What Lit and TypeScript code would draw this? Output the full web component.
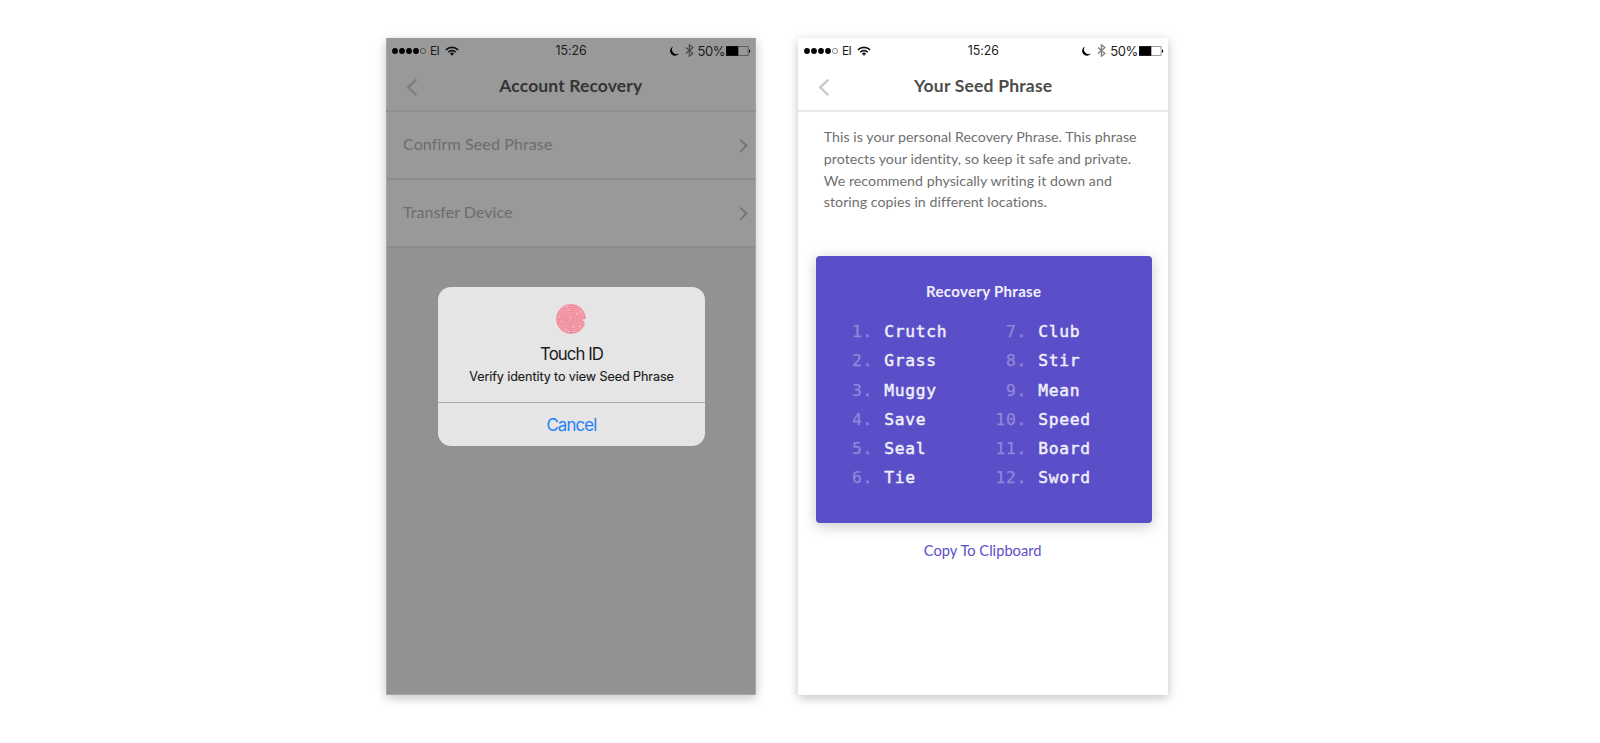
import { LitElement, html, css, svg } from "lit";
import { customElement, property } from "lit/decorators.js";

@customElement("status-bar")
class StatusBar extends LitElement {
  static styles = css`
    :host {
      display: grid;
      grid-template-columns: 1fr auto 1fr;
      align-items: center;
      height: 24px;
      padding: 0 4.5px 0 6px;
      font: 12.4px/24px Inter, "Liberation Sans", sans-serif;
      color: #1c1c1c;
    }
    svg { display: block; flex: none; }
    .left, .right { display: flex; align-items: center; }
    .right { justify-content: flex-end; }
    .carrier { font-size: 12px; margin: 0 6px 0 4px; letter-spacing: -0.6px; }
    .time { letter-spacing: -0.05px; padding: 1px 1px 0 0; }
    .moon { margin-right: 6px; }
    .blue { margin-right: 4px; }
    .pct { font-size: 13px; letter-spacing: -0.45px; margin-right: 1px; padding-top: 1px; }
  `;
  render() {
    return html`
      <div class="left">
        <svg width="34" height="8" viewBox="0 0 34 8">
          ${[3, 10, 17, 24].map((x) => svg`<circle cx=${x} cy="4" r="2.9"/>`)}
          <circle cx="31" cy="4" r="2.6" fill="none" stroke="#000" stroke-opacity=".55" stroke-width=".8"/>
        </svg>
        <span class="carrier">EI</span>
        <svg width="14" height="10" viewBox="0 0 14 10" fill="none" stroke="#111" stroke-width="1.6">
          <path d="M.9 3.9a8.7 8.7 0 0 1 12.2 0"/>
          <path d="M3.2 6.2a5.4 5.4 0 0 1 7.6 0"/>
          <path d="M4.9 7.6a3 3 0 0 1 4.2 0L7 9.8z" fill="#111" stroke="none"/>
        </svg>
      </div>
      <span class="time">15:26</span>
      <div class="right">
        <svg class="moon" width="9" height="10" viewBox="0 0 9 10">
          <path d="M3.2.4A4.8 4.8 0 1 0 9 7.4 4.6 4.6 0 0 1 3.2.4z"/>
        </svg>
        <svg class="blue" width="9" height="13" viewBox="0 0 9 13" fill="none" stroke="#000" stroke-opacity=".5" stroke-width="1.3">
          <path d="M.9 3.4l7 6L4.4 12.2V.8l3.5 2.8-7 6"/>
        </svg>
        <span class="pct">50%</span>
        <svg width="25" height="10" viewBox="0 0 25 10">
          <rect x=".5" y=".6" width="21.6" height="8.8" fill="none" stroke="#000" stroke-opacity=".45" stroke-width=".9"/>
          <rect x=".1" y=".2" width="12.2" height="9.6"/>
          <path d="M23 3.2a1.9 1.9 0 0 1 0 3.6z"/>
        </svg>
      </div>`;
  }
}

@customElement("nav-header")
class NavHeader extends LitElement {
  @property() heading = "";
  static styles = css`
    :host {
      display: grid;
      grid-template-columns: 60px 1fr 60px;
      align-items: start;
      height: 48px;
      color: var(--title);
      border-bottom: 2px solid var(--line);
    }
    svg { display: block; margin: 16px 0 0 20px; }
    .title {
      text-align: center;
      white-space: nowrap;
      font: 700 17.5px/48px Lato, sans-serif;
      letter-spacing: var(--track, 0.12px);
    }
  `;
  render() {
    return html`
      <svg width="12" height="19" viewBox="0 0 12 19" fill="none" stroke="var(--back)" stroke-width="2.3">
        <path d="M10.3 1.6L2.2 9.3l8.1 7.9"/>
      </svg>
      <span class="title">${this.heading}</span>`;
  }
}

// Fingerprint glyph: concentric ridges over a tinted disc, with small breaks.
@customElement("finger-print")
class FingerPrint extends LitElement {
  static styles = css`
    :host, svg { display: block; }
  `;
  render() {
    const gaps = [[11, 2.5], [12.5, 6], [21, 9.5], [24.5, 8], [3.5, 12.5], [6.5, 17.5], [14, 12.5], [26.5, 16], [17, 22.5], [10, 26], [13, 27.5], [18, 27], [24, 22.5]];
    return html`<svg width="30" height="30" viewBox="0 0 30 30">
      <circle cx="15" cy="15" r="14.9" fill="#f3a6b1"/>
      <g fill="none" stroke="#ee7f92" stroke-width=".9">
        ${[2, 4, 6, 8, 10, 12, 14].map((r) => svg`<circle cx="15" cy="15" r=${r}/>`)}
      </g>
      <g fill="#f4d3d7">${gaps.map(([x, y]) => svg`<circle cx=${x} cy=${y} r=".8"/>`)}</g>
      <path d="M30.5 14.5l-3.6 1.2 1.6 2-.6 2.6 3-1z" fill="#e5e5e5"/>
    </svg>`;
  }
}

const WORDS = ["Crutch", "Grass", "Muggy", "Save", "Seal", "Tie", "Club", "Stir", "Mean", "Speed", "Board", "Sword"];

@customElement("app-root")
class AppRoot extends LitElement {
  static styles = css`
    :host {
      display: flex;
      align-items: flex-start;
      gap: 42.4px;
      box-sizing: border-box;
      height: 743px;
      padding: 38px 0 0 386px;
      overflow: hidden;
      background: #fff;
      font-family: Lato, sans-serif;
    }
    .phone {
      flex: none;
      box-sizing: border-box;
      height: 657px;
      box-shadow: 0 3px 10px rgba(0, 0, 0, 0.24);
    }
    .dim {
      width: 369.6px;
      display: grid;
      background: #929292;
      --title: #343434;
      --line: #8f8f8f;
      --back: #7e7e7e;
      box-shadow: 0 3px 10px rgba(0, 0, 0, 0.24), inset 0 0 0 1px #a8a8a8;
    }
    .dim > * { grid-area: 1 / 1; }
    .top { background: #999; margin: 1px 1px 0; }
    .top status-bar { margin: -1px -1px 0; }
    .top nav-header { margin: 0 -1px; }
    .lit {
      width: 370.4px;
      background: #fff;
      --title: #4c4c4c;
      --line: #e8e8e8;
      --back: #c9c9cc;
      --track: 0.2px;
    }
    .row {
      display: flex;
      justify-content: space-between;
      align-items: flex-start;
      height: 66px;
      padding: 0 6.5px 0 16px;
      border-bottom: 2px solid #8c8c8c;
      font-size: 16px;
      line-height: 64px;
      letter-spacing: 0.13px;
      color: #6c6c6c;
    }
    .row + .row { letter-spacing: 0.03px; }
    .row svg { display: block; margin-top: 26px; }
    .dialog {
      align-self: start;
      justify-self: center;
      width: 266.4px;
      height: 159px;
      margin: 248.7px 0 0 1.4px;
      border-radius: 13px;
      background: #e5e5e5;
      text-align: center;
      font-family: Inter, "Liberation Sans", sans-serif;
      color: #1b1b1b;
    }
    .message {
      height: 116px;
      box-sizing: border-box;
      padding-top: 17.3px;
      border-bottom: 1px solid #a9a9ad;
    }
    finger-print { width: 30px; margin: 0 auto; }
    .name { font-size: 16.8px; line-height: 24px; letter-spacing: -0.95px; margin-top: 8px; }
    .why { font-size: 12.6px; line-height: 21px; letter-spacing: -0.1px; -webkit-text-stroke: 0.15px; }
    .cancel { font-size: 16.8px; line-height: 44.5px; letter-spacing: -0.8px; color: #1f7ffb; }
    .intro {
      margin: 14.2px 0 0 25.8px;
      font-size: 14.2px;
      line-height: 21.7px;
      letter-spacing: 0.04px;
      color: #6f6f6f;
      white-space: nowrap;
    }
    .card {
      width: 335.8px;
      height: 266.3px;
      margin: 43.3px 0 0 17.8px;
      box-sizing: border-box;
      padding-top: 24px;
      border-radius: 4px;
      background: #5b4fc9;
      box-shadow: 0 3px 14px rgba(0, 0, 0, 0.22);
      color: #f1f0fb;
    }
    .card h2 {
      margin: 0;
      text-align: center;
      font: 700 15px/23px Lato, sans-serif;
      letter-spacing: 0.32px;
    }
    .words {
      display: grid;
      grid-auto-flow: column;
      grid-template: repeat(6, 29.15px) / 154px auto;
      justify-content: start;
      margin-top: 14px;
      padding-left: 34.5px;
      font: 16.3px/29.15px "DejaVu Sans Mono", "Liberation Mono", monospace;
      letter-spacing: 0.7px;
      -webkit-text-stroke: 0.45px #f1f0fb;
    }
    .word { display: grid; grid-template-columns: 21.5px auto; column-gap: 12.5px; }
    .word:nth-child(n + 7) .num { margin-left: -11px; }
    .num { text-align: right; white-space: nowrap; color: #9188da; -webkit-text-stroke: 0.25px #9188da; position: relative; left: 1.3px; }
    .copy {
      margin-top: 16px;
      padding-right: 1px;
      text-align: center;
      font-size: 14.7px;
      line-height: 23px;
      color: #5b4fc9;
    }
  `;

  row(label: string) {
    return html`<div class="row">
      <span>${label}</span>
      <svg width="9" height="15" viewBox="0 0 9 15" fill="none" stroke="#737373" stroke-width="1.9">
        <path d="M1.3 1.6l6.1 6-6.1 6"/>
      </svg>
    </div>`;
  }

  render() {
    return html`
      <section class="phone dim">
        <div class="screen">
          <div class="top">
            <status-bar></status-bar>
            <nav-header heading="Account Recovery"></nav-header>
            ${this.row("Confirm Seed Phrase")} ${this.row("Transfer Device")}
          </div>
        </div>
        <div class="dialog">
          <div class="message">
            <finger-print></finger-print>
            <div class="name">Touch ID</div>
            <div class="why">Verify identity to view Seed Phrase</div>
          </div>
          <div class="cancel">Cancel</div>
        </div>
      </section>
      <section class="phone lit">
        <status-bar></status-bar>
        <nav-header heading="Your Seed Phrase"></nav-header>
        <div class="intro">
          This is your personal Recovery Phrase. This phrase<br />protects your identity, so keep it safe and private.<br />We
          recommend physically writing it down and<br />storing copies in different locations.
        </div>
        <div class="card">
          <h2>Recovery Phrase</h2>
          <div class="words">
            ${WORDS.map((w, i) => html`<div class="word"><span class="num">${i + 1}.</span><span>${w}</span></div>`)}
          </div>
        </div>
        <div class="copy">Copy To Clipboard</div>
      </section>`;
  }
}
